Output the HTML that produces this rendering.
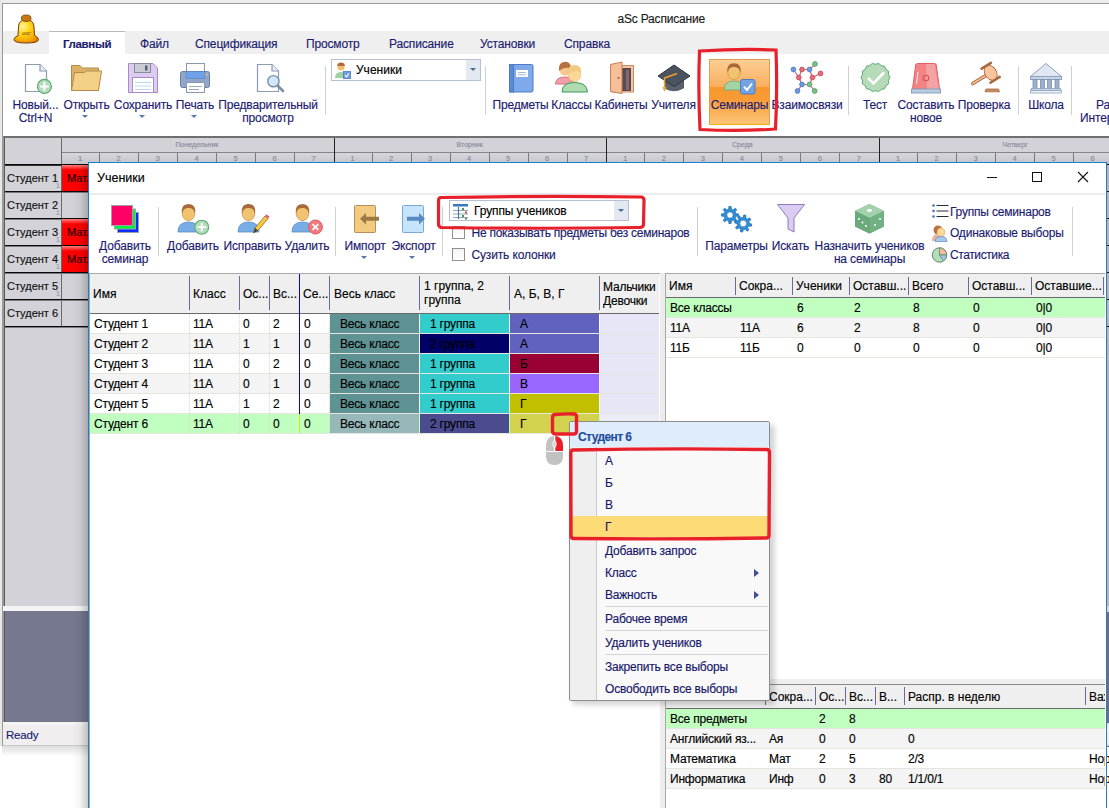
<!DOCTYPE html>
<html><head><meta charset="utf-8">
<style>
*{box-sizing:border-box;margin:0;padding:0}
html,body{width:1109px;height:808px;overflow:hidden;background:#fff}
body{position:relative;font-family:"Liberation Sans",sans-serif;font-size:12px;color:#000;-webkit-text-stroke:0.15px currentColor}
.a{position:absolute}
.t{position:absolute;white-space:nowrap;line-height:14px}
.nv{color:#1c1c70}
.lbl{position:absolute;white-space:nowrap;line-height:13px;color:#1c1c70;text-align:center;letter-spacing:-0.15px}
.sep{position:absolute;width:1px;background:#c8c8c8}
.arr{position:absolute;width:0;height:0;border-left:3px solid transparent;border-right:3px solid transparent;border-top:3px solid #5577aa}
.tiny{position:absolute;white-space:nowrap;font-size:7px;line-height:8px;color:#8a8a9a;text-align:center}
</style></head><body>
<div class="a" style="left:0px;top:0px;width:1109px;height:3px;background:#ececec"></div>
<div class="a" style="left:0px;top:0px;width:2px;height:746px;background:#e8e8e8"></div>
<div class="a" style="left:2px;top:3px;width:1107px;height:743px;background:#fff;border-left:1px solid #9a9a9a;border-top:1px solid #9a9a9a"></div>
<div class="t" style="left:617.5px;top:11.5px;color:#1a1a1a;letter-spacing:-0.2px">aSc Расписание</div>
<div class="a" style="left:3px;top:31px;width:1106px;height:23px;background:#efefef"></div>
<div class="a" style="left:49px;top:31px;width:76px;height:23px;background:#fff;border-top:1px solid #b9b9b9"></div>
<div class="t nv" style="left:63px;top:36px;font-weight:bold;font-size:11.5px;letter-spacing:-0.35px;top:37px">Главный</div>
<div class="t nv" style="left:140px;top:36px;letter-spacing:-0.15px;top:36.5px">Файл</div>
<div class="t nv" style="left:195px;top:36px;letter-spacing:-0.15px;top:36.5px">Спецификация</div>
<div class="t nv" style="left:306px;top:36px;letter-spacing:-0.15px;top:36.5px">Просмотр</div>
<div class="t nv" style="left:389px;top:36px;letter-spacing:-0.15px;top:36.5px">Расписание</div>
<div class="t nv" style="left:480px;top:36px;letter-spacing:-0.15px;top:36.5px">Установки</div>
<div class="t nv" style="left:564px;top:36px;letter-spacing:-0.15px;top:36.5px">Справка</div>
<div class="lbl" style="left:-34.5px;top:99px;width:140px;">Новый...</div>
<div class="lbl" style="left:-34.5px;top:112px;width:140px;">Ctrl+N</div>
<div class="lbl" style="left:16.5px;top:99px;width:140px;">Открыть</div>
<div class="lbl" style="left:73.0px;top:99px;width:140px;">Сохранить</div>
<div class="lbl" style="left:125.0px;top:99px;width:140px;">Печать</div>
<div class="lbl" style="left:198.0px;top:99px;width:140px;">Предварительный</div>
<div class="lbl" style="left:198.0px;top:112px;width:140px;">просмотр</div>
<div class="lbl" style="left:450.5px;top:99px;width:140px;">Предметы</div>
<div class="lbl" style="left:501.5px;top:99px;width:140px;">Классы</div>
<div class="lbl" style="left:551.0px;top:99px;width:140px;">Кабинеты</div>
<div class="lbl" style="left:603.5px;top:99px;width:140px;">Учителя</div>
<div class="lbl" style="left:737.0px;top:99px;width:140px;">Взаимосвязи</div>
<div class="lbl" style="left:805.0px;top:99px;width:140px;">Тест</div>
<div class="lbl" style="left:856.0px;top:99px;width:140px;">Составить</div>
<div class="lbl" style="left:856.0px;top:112px;width:140px;">новое</div>
<div class="lbl" style="left:914.0px;top:99px;width:140px;">Проверка</div>
<div class="lbl" style="left:976.0px;top:99px;width:140px;">Школа</div>
<div class="lbl" style="left:1096px;top:99px;text-align:left">Расписание</div>
<div class="lbl" style="left:1080px;top:112px;text-align:left">Интерактивное</div>
<div class="arr" style="left:82px;top:115px"></div>
<div class="arr" style="left:139px;top:115px"></div>
<div class="arr" style="left:191px;top:115px"></div>
<div class="a" style="left:325px;top:66px;width:1px;height:49px;background:#cfcfcf"></div>
<div class="a" style="left:485px;top:66px;width:1px;height:49px;background:#cfcfcf"></div>
<div class="a" style="left:848px;top:66px;width:1px;height:49px;background:#cfcfcf"></div>
<div class="a" style="left:1018px;top:66px;width:1px;height:49px;background:#cfcfcf"></div>
<div class="a" style="left:1071px;top:66px;width:1px;height:49px;background:#cfcfcf"></div>
<div class="a" style="left:331px;top:59px;width:150px;height:22px;background:#fff;border:1px solid #b7c0d0"></div>
<div class="a" style="left:466px;top:60px;width:14px;height:20px;background:#e4e8f0"></div>
<div class="arr" style="left:470px;top:68px;border-top-color:#4a6a9a"></div>
<div class="t" style="left:356px;top:63px;color:#000">Ученики</div>
<div class="a" style="left:709px;top:59px;width:61px;height:66px;background:linear-gradient(#fccf93,#f9ad5e 27px,#f8982f 27px,#f99a35 60%,#fcc57a);border:1px solid #d9a055;border-bottom-color:#f0b000;border-radius:1px"></div>
<div class="lbl" style="left:669.5px;top:99px;width:140px;">Семинары</div>
<svg class="a" style="left:0;top:0" width="1109" height="140" viewBox="0 0 1109 140">
<!-- bell logo -->
<defs><radialGradient id="bg1" cx="0.35" cy="0.3" r="0.8"><stop offset="0" stop-color="#fff6a0"/><stop offset="0.35" stop-color="#ffd820"/><stop offset="0.8" stop-color="#f5a800"/><stop offset="1" stop-color="#e08000"/></radialGradient></defs>
<path d="M18.5 27 Q18.5 20 26.2 19.5 Q34 20 34 27 L34.5 35.5 Q38.5 37.5 38.5 39.5 Q38.5 43 26.2 43 Q14 43 14 39.5 Q14 37.5 18 35.5 Z" fill="url(#bg1)" stroke="#7a3a08" stroke-width="1"/>
<path d="M16 39 Q26 44 37 39 Q36 41.5 26.2 42 Q16.5 41.5 16 39Z" fill="#ff8a00" opacity="0.8"/>
<ellipse cx="26.2" cy="18.2" rx="4.8" ry="3.2" fill="#c87a10" stroke="#6a3a08" stroke-width="0.8"/>
<text x="26.5" y="35" font-size="6.5" text-anchor="middle" fill="#7a3a08" font-family="Liberation Serif" font-style="italic">asc</text>
<!-- new -->
<path d="M25.5 64.5 H40 L46.5 71 V91.5 H25.5 Z" fill="#fff" stroke="#8a9bb2" stroke-width="1.2"/>
<path d="M40 64.5 V71 H46.5" fill="#e8eef4" stroke="#8a9bb2" stroke-width="1.2"/>
<circle cx="44.4" cy="86.4" r="7" fill="#b3dcbc" stroke="#5ea874" stroke-width="1.2"/>
<path d="M44.4 82 V90.8 M40 86.4 H48.8" stroke="#fff" stroke-width="2"/>
<!-- folder -->
<path d="M71.5 65.5 H80 L82.5 68 H98.5 V90.5 H71.5 Z" fill="#dcb066" stroke="#b48a48"/>
<path d="M74.5 72.5 H84.5 L86.5 71 H101.5 L98.5 90.5 H71.5 Z" fill="#f4d087" stroke="#b48a48"/>
<!-- floppy -->
<path d="M128.5 63.5 H153 L157.5 68 V92.5 H128.5 Z" fill="#dccdf0" stroke="#a78bc6"/>
<rect x="134.5" y="63.5" width="16" height="9" fill="#c9ccd4" stroke="#858c9c"/>
<rect x="145" y="65.5" width="2.5" height="5" fill="#5a6272"/>
<rect x="132.5" y="77.5" width="21" height="15" fill="#fff" stroke="#a78bc6"/>
<path d="M135 82.5 H151 M135 86 H151 M135 89.5 H151" stroke="#b8d8f0" stroke-width="1"/>
<!-- printer -->
<rect x="186.5" y="63.5" width="18" height="9" fill="#fff" stroke="#8797b0"/>
<rect x="180.5" y="71.5" width="29" height="16" rx="2" fill="#8fa6c8" stroke="#6a80a0"/>
<rect x="186" y="71.5" width="19" height="7" fill="#6fa0e8" stroke="#5a80c0" stroke-width="0.6"/>
<circle cx="206.5" cy="74.5" r="1" fill="#f0d040"/>
<rect x="186.5" y="82.5" width="18" height="10" fill="#fff" stroke="#8797b0"/>
<path d="M189 86.5 H202 M189 89.5 H199" stroke="#9aa8bc"/>
<!-- preview -->
<path d="M257.5 64.5 H272 L278.5 71 V91.5 H257.5 Z" fill="#fff" stroke="#8a9bb2" stroke-width="1.2"/>
<path d="M272 64.5 V71 H278.5" fill="#e8eef4" stroke="#8a9bb2" stroke-width="1.2"/>
<line x1="277" y1="85" x2="283" y2="91" stroke="#7b90a8" stroke-width="2.6" stroke-linecap="round"/>
<circle cx="273.4" cy="81.2" r="5.6" fill="#d0e8fa" stroke="#7b90a8" stroke-width="1.4"/>
<!-- combo icon -->
<circle cx="341" cy="67" r="3.6" fill="#f0c070"/>
<path d="M337.3 66 Q337 62.5 341 62.5 Q345 62.5 344.8 66 Z" fill="#b06a3a"/>
<path d="M335 78 Q335 72 341 72 Q347 72 347 78 Z" fill="#9ed0a0"/>
<rect x="343.5" y="71.5" width="7" height="7" fill="#6f9fe0" stroke="#4a7ac0" stroke-width="0.8"/>
<path d="M345 75 L346.5 76.8 L349 73.5" stroke="#fff" fill="none" stroke-width="1.1"/>
<!-- book -->
<rect x="509.5" y="64.5" width="23.5" height="27.5" rx="1.5" fill="#7eaaeb" stroke="#4d7cc4"/>
<rect x="509.5" y="64.5" width="4" height="27.5" fill="#5b8bd2" stroke="#4d7cc4"/>
<rect x="516" y="70" width="12" height="7" fill="#fff"/>
<path d="M518 72.5 H526 M518 74.8 H526" stroke="#9ab4d8" stroke-width="0.9"/>
<!-- classes -->
<path d="M555.5 84 Q556 77 565 77 Q574 77 574 84 Z" fill="#f2a0a8" stroke="#d87080"/>
<circle cx="565" cy="70" r="5.5" fill="#f8c890"/>
<path d="M559 71 Q558 62 565 61.8 Q572 62 571 70 Q567 65 559 71Z" fill="#b8703e"/>
<path d="M562 92 Q562 82.5 574.5 82.5 Q587 82.5 587.5 92 Z" fill="#aedcb0" stroke="#3f9a5e"/>
<ellipse cx="574.5" cy="74.5" rx="6.3" ry="7.2" fill="#fcd898" stroke="#e8b870" stroke-width="0.6"/>
<path d="M567.8 74 Q567 65 574.5 65 Q582 65 581.3 74 Q579 68.5 567.8 74Z" fill="#f2cc7e"/>
<!-- door -->
<rect x="612.5" y="65.5" width="21" height="26.5" fill="#f4c4a0" stroke="#c58a64"/>
<rect x="619" y="68" width="12" height="23" fill="#5c4a52"/>
<rect x="626" y="70" width="3" height="20" fill="#806a72"/>
<path d="M610.5 64.5 L622 62 V93.5 L610.5 91.5 Z" fill="#f6bf98" stroke="#c27e58"/>
<circle cx="618.5" cy="78" r="0.9" fill="#8a5030"/>
<!-- cap -->
<path d="M664.5 79 V88 Q674 93.5 683.5 88 V79 Z" fill="#59626c" stroke="#3c444c" stroke-width="0.8"/>
<path d="M658 76 L674 65 L690 76 L674 86.5 Z" fill="#4b545e" stroke="#2e353c" stroke-width="1"/>
<path d="M677 73.5 L664.5 78 V88" stroke="#f2a52a" stroke-width="1.4" fill="none"/>
<path d="M662.5 87 L664.5 92 L666.5 87 Z" fill="#f2a52a"/>
<!-- seminars icon -->
<path d="M724 90 Q724 81 734 81 Q744 81 744 90 Z" fill="#a4d4a4" stroke="#70a878" stroke-width="0.8"/>
<ellipse cx="734" cy="72.5" rx="6.2" ry="7" fill="#f1c36f" stroke="#c89050" stroke-width="0.7"/>
<path d="M727.5 73 Q726 63.2 734 63.2 Q742 63.2 740.5 73 Q739.5 66.5 734 67 Q728.5 66.5 727.5 73Z" fill="#a8683a"/>
<rect x="740.5" y="79.5" width="14.5" height="14.5" rx="2" fill="#72a2e2" stroke="#4d7dc4"/>
<path d="M744 86.8 L747 90 L752 83.5" stroke="#fff" stroke-width="2" fill="none"/>
<!-- molecule -->
<g stroke-width="1.2">
<path d="M793.4 69.5 L798.8 77.5 M802 69.5 L798.8 77.5 M802 69.5 L809.5 69.5 M809.5 69.5 L815 64 M809.5 69.5 L812.5 77.5 M812.5 77.5 L820.5 73.5 M798.8 77.5 L802 84.5 M812.5 77.5 L809.5 84.5 M802 84.5 L809.5 84.5 M802 84.5 L797.5 91 M809.5 84.5 L814.7 91" stroke="#c86a7a"/>
</g>
<g stroke-width="0.8">
<circle cx="793.4" cy="69.5" r="2.4" fill="#6b9ae0" stroke="#4a78c0"/>
<circle cx="802" cy="69.5" r="2.4" fill="#e86a78" stroke="#c04a58"/>
<circle cx="809.5" cy="69.5" r="2.4" fill="#6b9ae0" stroke="#4a78c0"/>
<circle cx="815" cy="64" r="2.4" fill="#7cc08a" stroke="#4a9a5a"/>
<circle cx="820.5" cy="73.5" r="2.4" fill="#e86a78" stroke="#c04a58"/>
<circle cx="798.8" cy="77.5" r="2.4" fill="#e86a78" stroke="#c04a58"/>
<circle cx="812.5" cy="77.5" r="2.4" fill="#e86a78" stroke="#c04a58"/>
<circle cx="802" cy="84.5" r="2.4" fill="#6b9ae0" stroke="#4a78c0"/>
<circle cx="809.5" cy="84.5" r="2.4" fill="#7cc08a" stroke="#4a9a5a"/>
<circle cx="797.5" cy="91" r="2.4" fill="#6b9ae0" stroke="#4a78c0"/>
<circle cx="814.7" cy="91" r="2.4" fill="#7cc08a" stroke="#4a9a5a"/>
</g>
<!-- test badge -->
<polygon id="badge" fill="#b6dbb8" stroke="#5ea874" stroke-width="1" points="890.0,77.5 888.4,80.4 888.6,83.8 885.8,85.7 884.5,88.8 881.2,89.4 878.7,91.6 875.5,90.7 872.3,91.6 869.8,89.4 866.5,88.8 865.2,85.7 862.4,83.8 862.6,80.4 861.0,77.5 862.6,74.6 862.4,71.2 865.2,69.3 866.5,66.2 869.8,65.6 872.3,63.4 875.5,64.3 878.7,63.4 881.2,65.6 884.5,66.2 885.8,69.3 888.6,71.2 888.4,74.6"/>
<path d="M868 78 L873.5 83.5 L884 72.5" stroke="#fff" stroke-width="2.6" fill="none"/>
<!-- siren -->
<path d="M917.5 63.5 H934.5 Q936 63.5 936.3 65 L939.5 89 H912.5 L915.7 65 Q916 63.5 917.5 63.5Z" fill="#f28486" stroke="#e06064"/>
<path d="M926 64 H934.5 L938.8 89 H927 Z" fill="#f5a2a4"/>
<path d="M918 72 L916.5 84" stroke="#fff" stroke-width="1" opacity="0.8"/>
<circle cx="926" cy="78" r="2.8" fill="none" stroke="#d45458" stroke-width="1.1"/>
<rect x="911.5" y="89" width="29" height="4" fill="#b7cce0" stroke="#8aa2ba"/>
<!-- gavel -->
<path d="M972.8 83.5 L986 75.5" stroke="#a86a44" stroke-width="3.6" stroke-linecap="round"/>
<path d="M972.8 83.5 L986 75.5" stroke="#f2b890" stroke-width="1.8" stroke-linecap="round"/>
<g transform="rotate(-32 990.7 72.8)">
<ellipse cx="990.7" cy="72.8" rx="5.8" ry="8" fill="#fcc49a" stroke="#a86a44" stroke-width="0.9"/>
<rect x="984" y="63.2" width="13.4" height="2.6" rx="1.2" fill="#a86a44"/>
<rect x="984" y="79.8" width="13.4" height="2.6" rx="1.2" fill="#a86a44"/>
</g>
<path d="M986 89 H998.5 L999.5 91.8 H985 Z" fill="#c98a62" stroke="#a86a44" stroke-width="0.8"/>
<!-- school -->
<path d="M1030.5 76.5 L1046 63.5 L1061.5 76.5 Z" fill="#dfe8f2" stroke="#8ca2c0"/>
<rect x="1030.5" y="76.5" width="31" height="3" fill="#c8d4e2" stroke="#8ca2c0"/>
<rect x="1033" y="79.5" width="4" height="9" fill="#9bb0cc" stroke="#7a90b0" stroke-width="0.8"/>
<rect x="1040.5" y="79.5" width="4" height="9" fill="#9bb0cc" stroke="#7a90b0" stroke-width="0.8"/>
<rect x="1047.5" y="79.5" width="4" height="9" fill="#9bb0cc" stroke="#7a90b0" stroke-width="0.8"/>
<rect x="1055" y="79.5" width="4" height="9" fill="#9bb0cc" stroke="#7a90b0" stroke-width="0.8"/>
<rect x="1031.5" y="88.5" width="29" height="2" fill="#c8d4e2" stroke="#8ca2c0" stroke-width="0.8"/>
<rect x="1030.5" y="90.5" width="31" height="2.5" fill="#eef2f7" stroke="#8ca2c0" stroke-width="0.8"/>
<!-- red highlight ribbon -->
<path d="M699.5 51 Q740 48.5 776 50 Q777.5 90 775.5 129 Q738 131.5 700 129.5 Q698 90 699.5 51Z" fill="none" stroke="#e8202c" stroke-width="3.2"/>
</svg>

<div class="a" style="left:3px;top:136px;width:1106px;height:470px;background:#d2d2d8;border-top:2px solid #6f6f6f;border-left:1px solid #9a9a9a"></div>
<div class="a" style="left:4px;top:138px;width:1px;height:468px;background:#5a5a5a"></div>
<div class="a" style="left:62px;top:152px;width:1047px;height:1px;background:#858585"></div>
<div class="a" style="left:61px;top:138px;width:1px;height:189px;background:#6a6a6a"></div>
<div class="a" style="left:62px;top:153px;width:1047px;height:11px;background:linear-gradient(#d6d6dc,#c4c4cb)"></div>
<div class="tiny" style="left:61.0px;top:141px;width:272px">Понедельник</div>
<div class="tiny" style="left:61.0px;top:155px;width:38.0px;font-size:7.5px">1</div>
<div class="a" style="left:99px;top:153px;width:1px;height:11px;background:#7a7a7a"></div>
<div class="tiny" style="left:99.0px;top:155px;width:39.0px;font-size:7.5px">2</div>
<div class="a" style="left:138px;top:153px;width:1px;height:11px;background:#7a7a7a"></div>
<div class="tiny" style="left:138.0px;top:155px;width:39.0px;font-size:7.5px">3</div>
<div class="a" style="left:177px;top:153px;width:1px;height:11px;background:#7a7a7a"></div>
<div class="tiny" style="left:177.0px;top:155px;width:39.0px;font-size:7.5px">4</div>
<div class="a" style="left:216px;top:153px;width:1px;height:11px;background:#7a7a7a"></div>
<div class="tiny" style="left:216.0px;top:155px;width:39.0px;font-size:7.5px">5</div>
<div class="a" style="left:255px;top:153px;width:1px;height:11px;background:#7a7a7a"></div>
<div class="tiny" style="left:255.0px;top:155px;width:39.0px;font-size:7.5px">6</div>
<div class="a" style="left:294px;top:153px;width:1px;height:11px;background:#7a7a7a"></div>
<div class="tiny" style="left:294.0px;top:155px;width:39.0px;font-size:7.5px">7</div>
<div class="tiny" style="left:333.7px;top:141px;width:272px">Вторник</div>
<div class="tiny" style="left:333.7px;top:155px;width:38.0px;font-size:7.5px">1</div>
<div class="a" style="left:372px;top:153px;width:1px;height:11px;background:#7a7a7a"></div>
<div class="tiny" style="left:371.7px;top:155px;width:39.0px;font-size:7.5px">2</div>
<div class="a" style="left:411px;top:153px;width:1px;height:11px;background:#7a7a7a"></div>
<div class="tiny" style="left:410.7px;top:155px;width:39.0px;font-size:7.5px">3</div>
<div class="a" style="left:450px;top:153px;width:1px;height:11px;background:#7a7a7a"></div>
<div class="tiny" style="left:449.7px;top:155px;width:39.0px;font-size:7.5px">4</div>
<div class="a" style="left:489px;top:153px;width:1px;height:11px;background:#7a7a7a"></div>
<div class="tiny" style="left:488.7px;top:155px;width:39.0px;font-size:7.5px">5</div>
<div class="a" style="left:528px;top:153px;width:1px;height:11px;background:#7a7a7a"></div>
<div class="tiny" style="left:527.7px;top:155px;width:39.0px;font-size:7.5px">6</div>
<div class="a" style="left:567px;top:153px;width:1px;height:11px;background:#7a7a7a"></div>
<div class="tiny" style="left:566.7px;top:155px;width:39.0px;font-size:7.5px">7</div>
<div class="a" style="left:334px;top:138px;width:1px;height:26px;background:#222"></div>
<div class="tiny" style="left:606.4px;top:141px;width:272px">Среда</div>
<div class="tiny" style="left:606.4px;top:155px;width:38.0px;font-size:7.5px">1</div>
<div class="a" style="left:644px;top:153px;width:1px;height:11px;background:#7a7a7a"></div>
<div class="tiny" style="left:644.4px;top:155px;width:39.0px;font-size:7.5px">2</div>
<div class="a" style="left:683px;top:153px;width:1px;height:11px;background:#7a7a7a"></div>
<div class="tiny" style="left:683.4px;top:155px;width:39.0px;font-size:7.5px">3</div>
<div class="a" style="left:722px;top:153px;width:1px;height:11px;background:#7a7a7a"></div>
<div class="tiny" style="left:722.4px;top:155px;width:39.0px;font-size:7.5px">4</div>
<div class="a" style="left:761px;top:153px;width:1px;height:11px;background:#7a7a7a"></div>
<div class="tiny" style="left:761.4px;top:155px;width:39.0px;font-size:7.5px">5</div>
<div class="a" style="left:800px;top:153px;width:1px;height:11px;background:#7a7a7a"></div>
<div class="tiny" style="left:800.4px;top:155px;width:39.0px;font-size:7.5px">6</div>
<div class="a" style="left:839px;top:153px;width:1px;height:11px;background:#7a7a7a"></div>
<div class="tiny" style="left:839.4px;top:155px;width:39.0px;font-size:7.5px">7</div>
<div class="a" style="left:606px;top:138px;width:1px;height:26px;background:#222"></div>
<div class="tiny" style="left:879.1px;top:141px;width:272px">Четверг</div>
<div class="tiny" style="left:879.1px;top:155px;width:38.0px;font-size:7.5px">1</div>
<div class="a" style="left:917px;top:153px;width:1px;height:11px;background:#7a7a7a"></div>
<div class="tiny" style="left:917.1px;top:155px;width:39.0px;font-size:7.5px">2</div>
<div class="a" style="left:956px;top:153px;width:1px;height:11px;background:#7a7a7a"></div>
<div class="tiny" style="left:956.1px;top:155px;width:39.0px;font-size:7.5px">3</div>
<div class="a" style="left:995px;top:153px;width:1px;height:11px;background:#7a7a7a"></div>
<div class="tiny" style="left:995.1px;top:155px;width:39.0px;font-size:7.5px">4</div>
<div class="a" style="left:1034px;top:153px;width:1px;height:11px;background:#7a7a7a"></div>
<div class="tiny" style="left:1034.1px;top:155px;width:39.0px;font-size:7.5px">5</div>
<div class="a" style="left:1073px;top:153px;width:1px;height:11px;background:#7a7a7a"></div>
<div class="tiny" style="left:1073.1px;top:155px;width:39.0px;font-size:7.5px">6</div>
<div class="a" style="left:1112px;top:153px;width:1px;height:11px;background:#7a7a7a"></div>
<div class="tiny" style="left:1112.1px;top:155px;width:39.0px;font-size:7.5px">7</div>
<div class="a" style="left:879px;top:138px;width:1px;height:26px;background:#222"></div>
<div class="a" style="left:5px;top:164px;width:1104px;height:1px;background:#0a0a0a"></div>
<div class="a" style="left:5px;top:165px;width:1104px;height:1px;background:#333"></div>
<div class="a" style="left:5px;top:191px;width:1104px;height:1px;background:#0a0a0a"></div>
<div class="a" style="left:5px;top:192px;width:1104px;height:1px;background:#7a7a80"></div>
<div class="a" style="left:5px;top:218px;width:1104px;height:1px;background:#0a0a0a"></div>
<div class="a" style="left:5px;top:219px;width:1104px;height:1px;background:#7a7a80"></div>
<div class="a" style="left:5px;top:245px;width:1104px;height:1px;background:#0a0a0a"></div>
<div class="a" style="left:5px;top:246px;width:1104px;height:1px;background:#7a7a80"></div>
<div class="a" style="left:5px;top:272px;width:1104px;height:1px;background:#0a0a0a"></div>
<div class="a" style="left:5px;top:273px;width:1104px;height:1px;background:#7a7a80"></div>
<div class="a" style="left:5px;top:299px;width:1104px;height:1px;background:#0a0a0a"></div>
<div class="a" style="left:5px;top:300px;width:1104px;height:1px;background:#7a7a80"></div>
<div class="a" style="left:5px;top:326px;width:1104px;height:1px;background:#0a0a0a"></div>
<div class="a" style="left:5px;top:327px;width:1104px;height:1px;background:#7a7a80"></div>
<div class="t" style="left:7px;top:171px;font-size:11px;color:#111">Студент 1</div>
<div class="tiny" style="left:55px;top:182px;width:6px;color:#9a9aaa">1</div>
<div class="a" style="left:62px;top:165px;width:27px;height:26px;background:linear-gradient(#ff8080,#ff0000 5px,#ff0000)"></div>
<div class="t" style="left:67px;top:171px;font-size:11px;color:#200">Мат.</div>
<div class="t" style="left:7px;top:198px;font-size:11px;color:#111">Студент 2</div>
<div class="tiny" style="left:55px;top:209px;width:6px;color:#9a9aaa">1</div>
<div class="t" style="left:7px;top:225px;font-size:11px;color:#111">Студент 3</div>
<div class="tiny" style="left:55px;top:236px;width:6px;color:#9a9aaa">1</div>
<div class="a" style="left:62px;top:219px;width:27px;height:26px;background:linear-gradient(#ff8080,#ff0000 5px,#ff0000)"></div>
<div class="t" style="left:67px;top:225px;font-size:11px;color:#200">Мат.</div>
<div class="t" style="left:7px;top:252px;font-size:11px;color:#111">Студент 4</div>
<div class="tiny" style="left:55px;top:263px;width:6px;color:#9a9aaa">1</div>
<div class="a" style="left:62px;top:246px;width:27px;height:26px;background:linear-gradient(#ff8080,#ff0000 5px,#ff0000)"></div>
<div class="t" style="left:67px;top:252px;font-size:11px;color:#200">Мат.</div>
<div class="t" style="left:7px;top:279px;font-size:11px;color:#111">Студент 5</div>
<div class="tiny" style="left:55px;top:290px;width:6px;color:#9a9aaa">1</div>
<div class="t" style="left:7px;top:306px;font-size:11px;color:#111">Студент 6</div>
<div class="a" style="left:3px;top:606px;width:1106px;height:5px;background:#f4f4f4"></div>
<div class="a" style="left:3px;top:611px;width:1106px;height:111px;background:#767890;border-left:1px solid #9a9a9a"></div>
<div class="a" style="left:4px;top:611px;width:1px;height:111px;background:#5a5a5a"></div>
<div class="a" style="left:3px;top:722px;width:1106px;height:3px;background:#f4f4f4"></div>
<div class="a" style="left:3px;top:725px;width:1106px;height:21px;background:#f0eeee;border-bottom:1px solid #c8c8c8"></div>
<div class="t nv" style="left:6px;top:729px;letter-spacing:-0.2px;font-size:11.5px;top:728px">Ready</div>
<div class="a" style="left:2px;top:746px;width:86px;height:10px;background:linear-gradient(rgba(0,0,0,0.13),rgba(0,0,0,0))"></div>
<div class="a" style="left:72px;top:164px;width:16px;height:644px;background:linear-gradient(90deg,rgba(0,0,0,0),rgba(0,0,0,0.04) 50%,rgba(0,0,0,0.2))"></div>
<div class="a" style="left:88px;top:162px;width:1019px;height:660px;background:#fff;border:1px solid #1b7fd0"></div>
<div class="t" style="left:97px;top:171px;font-size:12.5px">Ученики</div>
<div class="a" style="left:89px;top:193px;width:1017px;height:2px;background:#ececec"></div>
<div class="lbl" style="left:55.0px;top:240px;width:140px;">Добавить</div>
<div class="lbl" style="left:55.0px;top:253px;width:140px;">семинар</div>
<div class="lbl" style="left:123.0px;top:240px;width:140px;">Добавить</div>
<div class="lbl" style="left:182.5px;top:240px;width:140px;">Исправить</div>
<div class="lbl" style="left:237.0px;top:240px;width:140px;">Удалить</div>
<div class="lbl" style="left:295.0px;top:240px;width:140px;">Импорт</div>
<div class="lbl" style="left:343.5px;top:240px;width:140px;">Экспорт</div>
<div class="lbl" style="left:666.5px;top:240px;width:140px;">Параметры</div>
<div class="lbl" style="left:720.5px;top:240px;width:140px;">Искать</div>
<div class="lbl" style="left:799.5px;top:240px;width:140px;">Назначить учеников</div>
<div class="lbl" style="left:799.5px;top:253px;width:140px;">на семинары</div>
<div class="arr" style="left:361px;top:256px"></div>
<div class="arr" style="left:409px;top:256px"></div>
<div class="a" style="left:158px;top:207px;width:1px;height:49px;background:#cfcfcf"></div>
<div class="a" style="left:335px;top:207px;width:1px;height:49px;background:#cfcfcf"></div>
<div class="a" style="left:442px;top:207px;width:1px;height:49px;background:#cfcfcf"></div>
<div class="a" style="left:697px;top:207px;width:1px;height:49px;background:#cfcfcf"></div>
<div class="a" style="left:1072px;top:207px;width:1px;height:49px;background:#cfcfcf"></div>
<div class="a" style="left:449px;top:200px;width:180px;height:21px;background:#fff;border:1px solid #b7c0d0"></div>
<div class="a" style="left:614px;top:201px;width:14px;height:19px;background:#e4e8f0"></div>
<div class="arr" style="left:618px;top:209px;border-top-color:#4a6a9a"></div>
<div class="t" style="left:474px;top:204px;color:#000;letter-spacing:-0.1px">Группы учеников</div>
<div class="a" style="left:452px;top:226px;width:13px;height:13px;background:linear-gradient(#f4f4f4,#fff);border:1px solid #8f8f8f"></div>
<div class="a" style="left:452px;top:248px;width:13px;height:13px;background:linear-gradient(#f4f4f4,#fff);border:1px solid #8f8f8f"></div>
<div class="t nv" style="left:471.5px;top:226px;letter-spacing:-0.25px">Не показывать предметы без семинаров</div>
<div class="t nv" style="left:471.5px;top:248px;letter-spacing:-0.15px">Сузить колонки</div>
<div class="t nv" style="left:950px;top:204.5px;letter-spacing:-0.2px">Группы семинаров</div>
<div class="t nv" style="left:950px;top:226px;letter-spacing:-0.2px">Одинаковые выборы</div>
<div class="t nv" style="left:950px;top:248px;letter-spacing:-0.4px">Статистика</div>
<svg class="a" style="left:0;top:160px" width="1109" height="120" viewBox="0 160 1109 120">
<!-- add seminar squares -->
<rect x="117.5" y="212.5" width="21" height="20" fill="#0a2cff" stroke="#9aa0b0"/>
<rect x="114.5" y="209" width="21" height="20" fill="#00f040" stroke="#a0a8a0"/>
<rect x="111.5" y="205.5" width="21" height="20" fill="#ff0066" stroke="#a0a0a8"/>
<!-- person generic -->
<g>
<path d="M178 232 Q178 222 188.5 222 Q199 222 199 232 Z" fill="#78aee6" stroke="#5a8cc8" stroke-width="0.8"/>
<ellipse cx="188.5" cy="213.5" rx="6.3" ry="7.2" fill="#f1c36f" stroke="#c89050" stroke-width="0.7"/>
<path d="M182 214 Q180.5 204 188.5 204 Q196.5 204 195 214 Q194 207.5 188.5 208 Q183 207.5 182 214Z" fill="#a8683a"/>
</g>
<circle cx="201.7" cy="227.2" r="7" fill="#b3dcbc" stroke="#5ea874" stroke-width="1.1"/>
<path d="M201.7 223 V231.4 M197.5 227.2 H205.9" stroke="#fff" stroke-width="1.8"/>
<g transform="translate(60 0)">
<path d="M178 232 Q178 222 188.5 222 Q199 222 199 232 Z" fill="#78aee6" stroke="#5a8cc8" stroke-width="0.8"/>
<ellipse cx="188.5" cy="213.5" rx="6.3" ry="7.2" fill="#f1c36f" stroke="#c89050" stroke-width="0.7"/>
<path d="M182 214 Q180.5 204 188.5 204 Q196.5 204 195 214 Q194 207.5 188.5 208 Q183 207.5 182 214Z" fill="#a8683a"/>
</g>
<path d="M253.5 233 L255 228 L265 216 L268 218.5 L258 230.5 Z" fill="#f5c842" stroke="#8a6a30" stroke-width="0.8"/>
<path d="M265 216 L266.5 214.2 L269.5 216.7 L268 218.5 Z" fill="#e86070"/>
<path d="M253.5 233 L255 228 L258 230.5 Z" fill="#404040"/>
<g transform="translate(114 0)">
<path d="M178 232 Q178 222 188.5 222 Q199 222 199 232 Z" fill="#78aee6" stroke="#5a8cc8" stroke-width="0.8"/>
<ellipse cx="188.5" cy="213.5" rx="6.3" ry="7.2" fill="#f1c36f" stroke="#c89050" stroke-width="0.7"/>
<path d="M182 214 Q180.5 204 188.5 204 Q196.5 204 195 214 Q194 207.5 188.5 208 Q183 207.5 182 214Z" fill="#a8683a"/>
</g>
<circle cx="315.4" cy="227" r="7" fill="#f07a80" stroke="#e05a62" stroke-width="1"/>
<path d="M312.5 224.1 L318.3 229.9 M318.3 224.1 L312.5 229.9" stroke="#fff" stroke-width="1.8"/>
<!-- import -->
<rect x="354.5" y="205.5" width="21" height="27" rx="1" fill="#f2ca80" stroke="#b8905a"/>
<path d="M360 218.8 L366 213 V216.8 H379 V220.8 H366 V224.6 Z" fill="#9a7a42"/>
<!-- export -->
<rect x="402.5" y="205.5" width="21" height="27" rx="1" fill="#c6e5fb" stroke="#7ea8d8"/>
<path d="M425 218.8 L419 213 V216.8 H407 V220.8 H419 V224.6 Z" fill="#5a88c2"/>
<!-- combo groups icon -->
<rect x="453" y="204" width="15" height="2.5" fill="#3a78c0"/>
<path d="M453 210.5 H468 M453 214 H468 M453 217.5 H468" stroke="#9aa4b0" stroke-width="1"/>
<path d="M458.5 207 V219" stroke="#3a78c0" stroke-width="1.2"/>
<rect x="462" y="208" width="2" height="2" fill="#40a040"/><rect x="465" y="211.5" width="2" height="2" fill="#e04040"/><rect x="462" y="215" width="2" height="2" fill="#40a040"/><rect x="465" y="218" width="2" height="1.5" fill="#40a040"/>
<!-- gears -->
<polygon points="735.85,213.65 738.53,213.92 738.53,216.08 735.85,216.35 735.09,218.18 736.80,220.27 735.27,221.80 733.18,220.09 731.35,220.85 731.08,223.53 728.92,223.53 728.65,220.85 726.82,220.09 724.73,221.80 723.20,220.27 724.91,218.18 724.15,216.35 721.47,216.08 721.47,213.92 724.15,213.65 724.91,211.82 723.20,209.73 724.73,208.20 726.82,209.91 728.65,209.15 728.92,206.47 731.08,206.47 731.35,209.15 733.18,209.91 735.27,208.20 736.80,209.73 735.09,211.82" fill="#2f8fd6" stroke="#1f70b4" stroke-width="0.8" stroke-linejoin="round"/>
<circle cx="730" cy="215" r="3.1" fill="#fff" stroke="#1f70b4" stroke-width="0.5"/>
<polygon points="749.20,223.34 751.78,224.14 751.35,226.25 748.66,225.98 747.55,227.63 748.81,230.02 747.02,231.21 745.31,229.12 743.36,229.50 742.56,232.08 740.45,231.65 740.72,228.96 739.07,227.85 736.68,229.11 735.49,227.32 737.58,225.61 737.20,223.66 734.62,222.86 735.05,220.75 737.74,221.02 738.85,219.37 737.59,216.98 739.38,215.79 741.09,217.88 743.04,217.50 743.84,214.92 745.95,215.35 745.68,218.04 747.33,219.15 749.72,217.89 750.91,219.68 748.82,221.39" fill="#2f8fd6" stroke="#1f70b4" stroke-width="0.8" stroke-linejoin="round"/>
<circle cx="743.2" cy="223.5" r="3.3" fill="#fff" stroke="#1f70b4" stroke-width="0.5"/>
<!-- funnel -->
<path d="M777.5 204.5 H804.5 L794 218 V232 L788 229 V218 Z" fill="#dccbf2" stroke="#8c7cb8" stroke-width="1"/>
<!-- dice -->
<path d="M869.5 204 L884 211 V226.5 L869.5 233.5 L855 226.5 V211 Z" fill="#5f9e70"/>
<path d="M869.5 204 L884 211 L869.5 218 L855 211 Z" fill="#a2d2ac"/>
<path d="M869.5 218 L884 211 V226.5 L869.5 233.5 Z" fill="#72b282"/>
<path d="M855 211 L869.5 218 V233.5 L855 226.5 Z" fill="#6aaa7a"/>
<ellipse cx="869.5" cy="210.5" rx="2.6" ry="1.4" fill="#fff"/>
<circle cx="859" cy="219" r="1" fill="#fff"/><circle cx="862.5" cy="222.5" r="1" fill="#fff"/><circle cx="866" cy="226" r="1" fill="#fff"/>
<circle cx="875" cy="225" r="1" fill="#fff"/><circle cx="880" cy="219" r="1" fill="#fff"/>
<!-- list icon -->
<g fill="#3a78c0"><circle cx="933.5" cy="205.5" r="1.3"/><circle cx="933.5" cy="211" r="1.3"/><circle cx="933.5" cy="216.5" r="1.3"/></g>
<path d="M936.5 205.5 H948.5 M936.5 211 H948.5 M936.5 216.5 H948.5" stroke="#252a35" stroke-width="1.2"/>
<!-- users icon -->
<circle cx="938" cy="230" r="4.5" fill="#b8703e"/>
<path d="M932 241 Q932 234 938 234 Q944 234 944 241Z" fill="#f0b0a0"/>
<ellipse cx="941" cy="232.5" rx="4" ry="4.6" fill="#fcd898" stroke="#d8a860" stroke-width="0.6"/>
<path d="M935 241.5 Q935 236.5 941 236.5 Q947 236.5 947 241.5Z" fill="#a8c8e8" stroke="#5a8ac0" stroke-width="0.7"/>
<!-- pie -->
<circle cx="939.5" cy="255" r="7.2" fill="#b6dbb8" stroke="#5c8a64" stroke-width="1"/>
<path d="M939.5 255 V247.8 A7.2 7.2 0 0 1 946.7 255 Z" fill="#f5b8a0" stroke="#5c8a64" stroke-width="0.8"/>
<path d="M939.5 255 H946.7 A7.2 7.2 0 0 1 943.5 261 Z" fill="#a0c4ec" stroke="#5c8a64" stroke-width="0.8"/>
<!-- red outline -->
<path d="M441 197.5 Q540 195.5 641.5 197 Q644.5 198 644 201 L643.5 224.5 Q643 227.5 640 227.5 Q540 229 441 227.5 Q438.5 226.5 438.5 224 L438.5 201 Q438.5 197.5 441 197.5Z" fill="none" stroke="#e8202c" stroke-width="3.2"/>
</svg>

<div class="a" style="left:89px;top:273px;width:571px;height:1px;background:#a8a8a8"></div>
<div class="a" style="left:89px;top:273px;width:1px;height:540px;background:#a8a8a8"></div>
<div class="a" style="left:90px;top:274px;width:569px;height:39px;background:#efefef"></div>
<div class="a" style="left:90px;top:313px;width:569px;height:1px;background:#6a6a6a"></div>
<div class="a" style="left:189px;top:276px;width:1px;height:34px;background:#6a6a9a"></div>
<div class="a" style="left:239px;top:276px;width:1px;height:34px;background:#6a6a9a"></div>
<div class="a" style="left:269px;top:276px;width:1px;height:34px;background:#6a6a9a"></div>
<div class="a" style="left:329px;top:276px;width:1px;height:34px;background:#6a6a9a"></div>
<div class="a" style="left:419px;top:276px;width:1px;height:34px;background:#6a6a9a"></div>
<div class="a" style="left:509px;top:276px;width:1px;height:34px;background:#6a6a9a"></div>
<div class="a" style="left:599px;top:276px;width:1px;height:34px;background:#6a6a9a"></div>
<div class="t" style="left:93px;top:287px">Имя</div>
<div class="t" style="left:193px;top:287px">Класс</div>
<div class="t" style="left:243px;top:287px">Ос...</div>
<div class="t" style="left:273px;top:287px">Вс...</div>
<div class="t" style="left:303px;top:287px">Се...</div>
<div class="t" style="left:334px;top:287px">Весь класс</div>
<div class="t" style="left:514px;top:287px">А, Б, В, Г</div>
<div class="t" style="left:424px;top:279px">1 группа, 2<br>группа</div>
<div class="t" style="left:603px;top:280px;width:56px;overflow:hidden;letter-spacing:-0.2px">Мальчики<br>Девочки</div>
<div class="a" style="left:90px;top:314px;width:569px;height:20px;background:#fff"></div>
<div class="a" style="left:90px;top:333px;width:569px;height:1px;background:#e6e6e0"></div>
<div class="a" style="left:189px;top:314px;width:1px;height:19px;background:repeating-linear-gradient(#d8d8d8 0 1px,transparent 1px 2px)"></div>
<div class="a" style="left:239px;top:314px;width:1px;height:19px;background:repeating-linear-gradient(#d8d8d8 0 1px,transparent 1px 2px)"></div>
<div class="a" style="left:269px;top:314px;width:1px;height:19px;background:repeating-linear-gradient(#d8d8d8 0 1px,transparent 1px 2px)"></div>
<div class="a" style="left:329px;top:314px;width:1px;height:19px;background:repeating-linear-gradient(#d8d8d8 0 1px,transparent 1px 2px)"></div>
<div class="a" style="left:330px;top:314px;width:89px;height:19px;background:#5f9393"></div>
<div class="a" style="left:420px;top:314px;width:89px;height:19px;background:#33cccc"></div>
<div class="a" style="left:510px;top:314px;width:89px;height:19px;background:#6161bf"></div>
<div class="a" style="left:600px;top:314px;width:59px;height:19px;background:#e6e6f6"></div>
<div class="t" style="left:94px;top:315px;line-height:19px;letter-spacing:-0.2px;">Студент 1</div>
<div class="t" style="left:193px;top:315px;line-height:19px;letter-spacing:-0.2px;">11А</div>
<div class="t" style="left:243px;top:315px;line-height:19px;letter-spacing:-0.2px;">0</div>
<div class="t" style="left:273px;top:315px;line-height:19px;letter-spacing:-0.2px;">2</div>
<div class="t" style="left:304px;top:315px;line-height:19px;letter-spacing:-0.2px;">0</div>
<div class="t" style="left:340px;top:315px;line-height:19px;letter-spacing:-0.2px;">Весь класс</div>
<div class="t" style="left:430px;top:315px;line-height:19px;letter-spacing:-0.2px;">1 группа</div>
<div class="t" style="left:520px;top:315px;line-height:19px;letter-spacing:-0.2px;">А</div>
<div class="a" style="left:90px;top:334px;width:569px;height:20px;background:#f4f4f4"></div>
<div class="a" style="left:90px;top:353px;width:569px;height:1px;background:#e6e6e0"></div>
<div class="a" style="left:189px;top:334px;width:1px;height:19px;background:repeating-linear-gradient(#d8d8d8 0 1px,transparent 1px 2px)"></div>
<div class="a" style="left:239px;top:334px;width:1px;height:19px;background:repeating-linear-gradient(#d8d8d8 0 1px,transparent 1px 2px)"></div>
<div class="a" style="left:269px;top:334px;width:1px;height:19px;background:repeating-linear-gradient(#d8d8d8 0 1px,transparent 1px 2px)"></div>
<div class="a" style="left:329px;top:334px;width:1px;height:19px;background:repeating-linear-gradient(#d8d8d8 0 1px,transparent 1px 2px)"></div>
<div class="a" style="left:330px;top:334px;width:89px;height:19px;background:#5f9393"></div>
<div class="a" style="left:420px;top:334px;width:89px;height:19px;background:#000066"></div>
<div class="a" style="left:510px;top:334px;width:89px;height:19px;background:#6161bf"></div>
<div class="a" style="left:600px;top:334px;width:59px;height:19px;background:#e6e6f6"></div>
<div class="t" style="left:94px;top:335px;line-height:19px;letter-spacing:-0.2px;">Студент 2</div>
<div class="t" style="left:193px;top:335px;line-height:19px;letter-spacing:-0.2px;">11А</div>
<div class="t" style="left:243px;top:335px;line-height:19px;letter-spacing:-0.2px;">1</div>
<div class="t" style="left:273px;top:335px;line-height:19px;letter-spacing:-0.2px;">1</div>
<div class="t" style="left:304px;top:335px;line-height:19px;letter-spacing:-0.2px;">0</div>
<div class="t" style="left:340px;top:335px;line-height:19px;letter-spacing:-0.2px;">Весь класс</div>
<div class="t" style="left:430px;top:335px;line-height:19px;letter-spacing:-0.2px;">2 группа</div>
<div class="t" style="left:520px;top:335px;line-height:19px;letter-spacing:-0.2px;">А</div>
<div class="a" style="left:90px;top:354px;width:569px;height:20px;background:#fff"></div>
<div class="a" style="left:90px;top:373px;width:569px;height:1px;background:#e6e6e0"></div>
<div class="a" style="left:189px;top:354px;width:1px;height:19px;background:repeating-linear-gradient(#d8d8d8 0 1px,transparent 1px 2px)"></div>
<div class="a" style="left:239px;top:354px;width:1px;height:19px;background:repeating-linear-gradient(#d8d8d8 0 1px,transparent 1px 2px)"></div>
<div class="a" style="left:269px;top:354px;width:1px;height:19px;background:repeating-linear-gradient(#d8d8d8 0 1px,transparent 1px 2px)"></div>
<div class="a" style="left:329px;top:354px;width:1px;height:19px;background:repeating-linear-gradient(#d8d8d8 0 1px,transparent 1px 2px)"></div>
<div class="a" style="left:330px;top:354px;width:89px;height:19px;background:#5f9393"></div>
<div class="a" style="left:420px;top:354px;width:89px;height:19px;background:#33cccc"></div>
<div class="a" style="left:510px;top:354px;width:89px;height:19px;background:#990033"></div>
<div class="a" style="left:600px;top:354px;width:59px;height:19px;background:#e6e6f6"></div>
<div class="t" style="left:94px;top:355px;line-height:19px;letter-spacing:-0.2px;">Студент 3</div>
<div class="t" style="left:193px;top:355px;line-height:19px;letter-spacing:-0.2px;">11А</div>
<div class="t" style="left:243px;top:355px;line-height:19px;letter-spacing:-0.2px;">0</div>
<div class="t" style="left:273px;top:355px;line-height:19px;letter-spacing:-0.2px;">2</div>
<div class="t" style="left:304px;top:355px;line-height:19px;letter-spacing:-0.2px;">0</div>
<div class="t" style="left:340px;top:355px;line-height:19px;letter-spacing:-0.2px;">Весь класс</div>
<div class="t" style="left:430px;top:355px;line-height:19px;letter-spacing:-0.2px;">1 группа</div>
<div class="t" style="left:520px;top:355px;line-height:19px;letter-spacing:-0.2px;">Б</div>
<div class="a" style="left:90px;top:374px;width:569px;height:20px;background:#f4f4f4"></div>
<div class="a" style="left:90px;top:393px;width:569px;height:1px;background:#e6e6e0"></div>
<div class="a" style="left:189px;top:374px;width:1px;height:19px;background:repeating-linear-gradient(#d8d8d8 0 1px,transparent 1px 2px)"></div>
<div class="a" style="left:239px;top:374px;width:1px;height:19px;background:repeating-linear-gradient(#d8d8d8 0 1px,transparent 1px 2px)"></div>
<div class="a" style="left:269px;top:374px;width:1px;height:19px;background:repeating-linear-gradient(#d8d8d8 0 1px,transparent 1px 2px)"></div>
<div class="a" style="left:329px;top:374px;width:1px;height:19px;background:repeating-linear-gradient(#d8d8d8 0 1px,transparent 1px 2px)"></div>
<div class="a" style="left:330px;top:374px;width:89px;height:19px;background:#5f9393"></div>
<div class="a" style="left:420px;top:374px;width:89px;height:19px;background:#33cccc"></div>
<div class="a" style="left:510px;top:374px;width:89px;height:19px;background:#9966ff"></div>
<div class="a" style="left:600px;top:374px;width:59px;height:19px;background:#e6e6f6"></div>
<div class="t" style="left:94px;top:375px;line-height:19px;letter-spacing:-0.2px;">Студент 4</div>
<div class="t" style="left:193px;top:375px;line-height:19px;letter-spacing:-0.2px;">11А</div>
<div class="t" style="left:243px;top:375px;line-height:19px;letter-spacing:-0.2px;">0</div>
<div class="t" style="left:273px;top:375px;line-height:19px;letter-spacing:-0.2px;">1</div>
<div class="t" style="left:304px;top:375px;line-height:19px;letter-spacing:-0.2px;">0</div>
<div class="t" style="left:340px;top:375px;line-height:19px;letter-spacing:-0.2px;">Весь класс</div>
<div class="t" style="left:430px;top:375px;line-height:19px;letter-spacing:-0.2px;">1 группа</div>
<div class="t" style="left:520px;top:375px;line-height:19px;letter-spacing:-0.2px;">В</div>
<div class="a" style="left:90px;top:394px;width:569px;height:20px;background:#fff"></div>
<div class="a" style="left:90px;top:413px;width:569px;height:1px;background:#e6e6e0"></div>
<div class="a" style="left:189px;top:394px;width:1px;height:19px;background:repeating-linear-gradient(#d8d8d8 0 1px,transparent 1px 2px)"></div>
<div class="a" style="left:239px;top:394px;width:1px;height:19px;background:repeating-linear-gradient(#d8d8d8 0 1px,transparent 1px 2px)"></div>
<div class="a" style="left:269px;top:394px;width:1px;height:19px;background:repeating-linear-gradient(#d8d8d8 0 1px,transparent 1px 2px)"></div>
<div class="a" style="left:329px;top:394px;width:1px;height:19px;background:repeating-linear-gradient(#d8d8d8 0 1px,transparent 1px 2px)"></div>
<div class="a" style="left:330px;top:394px;width:89px;height:19px;background:#5f9393"></div>
<div class="a" style="left:420px;top:394px;width:89px;height:19px;background:#33cccc"></div>
<div class="a" style="left:510px;top:394px;width:89px;height:19px;background:#c0c000"></div>
<div class="a" style="left:600px;top:394px;width:59px;height:19px;background:#e6e6f6"></div>
<div class="t" style="left:94px;top:395px;line-height:19px;letter-spacing:-0.2px;">Студент 5</div>
<div class="t" style="left:193px;top:395px;line-height:19px;letter-spacing:-0.2px;">11А</div>
<div class="t" style="left:243px;top:395px;line-height:19px;letter-spacing:-0.2px;">1</div>
<div class="t" style="left:273px;top:395px;line-height:19px;letter-spacing:-0.2px;">2</div>
<div class="t" style="left:304px;top:395px;line-height:19px;letter-spacing:-0.2px;">0</div>
<div class="t" style="left:340px;top:395px;line-height:19px;letter-spacing:-0.2px;">Весь класс</div>
<div class="t" style="left:430px;top:395px;line-height:19px;letter-spacing:-0.2px;">1 группа</div>
<div class="t" style="left:520px;top:395px;line-height:19px;letter-spacing:-0.2px;">Г</div>
<div class="a" style="left:90px;top:414px;width:569px;height:20px;background:#c0ffc0"></div>
<div class="a" style="left:90px;top:433px;width:569px;height:1px;background:#e6e6e0"></div>
<div class="a" style="left:189px;top:414px;width:1px;height:19px;background:repeating-linear-gradient(#d8d8d8 0 1px,transparent 1px 2px)"></div>
<div class="a" style="left:239px;top:414px;width:1px;height:19px;background:repeating-linear-gradient(#d8d8d8 0 1px,transparent 1px 2px)"></div>
<div class="a" style="left:269px;top:414px;width:1px;height:19px;background:repeating-linear-gradient(#d8d8d8 0 1px,transparent 1px 2px)"></div>
<div class="a" style="left:329px;top:414px;width:1px;height:19px;background:repeating-linear-gradient(#d8d8d8 0 1px,transparent 1px 2px)"></div>
<div class="a" style="left:330px;top:414px;width:89px;height:19px;background:#97b8b8"></div>
<div class="a" style="left:420px;top:414px;width:89px;height:19px;background:#4b4b90"></div>
<div class="a" style="left:510px;top:414px;width:89px;height:19px;background:#d2d24e"></div>
<div class="a" style="left:600px;top:414px;width:59px;height:19px;background:#ececf6"></div>
<div class="t" style="left:94px;top:415px;line-height:19px;letter-spacing:-0.2px;">Студент 6</div>
<div class="t" style="left:193px;top:415px;line-height:19px;letter-spacing:-0.2px;">11А</div>
<div class="t" style="left:243px;top:415px;line-height:19px;letter-spacing:-0.2px;">0</div>
<div class="t" style="left:273px;top:415px;line-height:19px;letter-spacing:-0.2px;">0</div>
<div class="t" style="left:304px;top:415px;line-height:19px;letter-spacing:-0.2px;">0</div>
<div class="t" style="left:340px;top:415px;line-height:19px;letter-spacing:-0.2px;">Весь класс</div>
<div class="t" style="left:430px;top:415px;line-height:19px;letter-spacing:-0.2px;">2 группа</div>
<div class="t" style="left:520px;top:415px;line-height:19px;letter-spacing:-0.2px;">Г</div>
<div class="a" style="left:299px;top:274px;width:1px;height:159px;background:#0000ff"></div>
<div class="a" style="left:299px;top:414px;width:1px;height:19px;background:#e0e000"></div>
<div class="a" style="left:660px;top:273px;width:5px;height:540px;background:#ececec"></div>
<div class="a" style="left:665px;top:273px;width:441px;height:1px;background:#a8a8a8"></div>
<div class="a" style="left:665px;top:273px;width:1px;height:540px;background:#a8a8a8"></div>
<div class="a" style="left:666px;top:274px;width:439px;height:23px;background:#efefef"></div>
<div class="a" style="left:666px;top:297px;width:439px;height:1px;background:#6a6a6a"></div>
<div class="a" style="left:735px;top:277px;width:1px;height:18px;background:#6a6a9a"></div>
<div class="a" style="left:792px;top:277px;width:1px;height:18px;background:#6a6a9a"></div>
<div class="a" style="left:849px;top:277px;width:1px;height:18px;background:#6a6a9a"></div>
<div class="a" style="left:908px;top:277px;width:1px;height:18px;background:#6a6a9a"></div>
<div class="a" style="left:968px;top:277px;width:1px;height:18px;background:#6a6a9a"></div>
<div class="a" style="left:1031px;top:277px;width:1px;height:18px;background:#6a6a9a"></div>
<div class="a" style="left:1103px;top:277px;width:1px;height:18px;background:#6a6a9a"></div>
<div class="t" style="left:669px;top:279px">Имя</div>
<div class="t" style="left:739px;top:279px">Сокра...</div>
<div class="t" style="left:796px;top:279px">Ученики</div>
<div class="t" style="left:853px;top:279px">Оставш...</div>
<div class="t" style="left:912px;top:279px">Всего</div>
<div class="t" style="left:972px;top:279px">Оставш...</div>
<div class="t" style="left:1035px;top:279px">Оставшие...</div>
<div class="a" style="left:666px;top:298px;width:439px;height:20px;background:#c0ffc0"></div>
<div class="a" style="left:666px;top:317px;width:439px;height:1px;background:#e6e6e0"></div>
<div class="t" style="left:670px;top:299px;line-height:19px;letter-spacing:-0.2px;">Все классы</div>
<div class="t" style="left:797px;top:299px;line-height:19px;letter-spacing:-0.2px;">6</div>
<div class="t" style="left:854px;top:299px;line-height:19px;letter-spacing:-0.2px;">2</div>
<div class="t" style="left:913px;top:299px;line-height:19px;letter-spacing:-0.2px;">8</div>
<div class="t" style="left:973px;top:299px;line-height:19px;letter-spacing:-0.2px;">0</div>
<div class="t" style="left:1036px;top:299px;line-height:19px;letter-spacing:-0.2px;">0|0</div>
<div class="a" style="left:666px;top:318px;width:439px;height:20px;background:#f4f4f4"></div>
<div class="a" style="left:666px;top:337px;width:439px;height:1px;background:#e6e6e0"></div>
<div class="t" style="left:670px;top:319px;line-height:19px;letter-spacing:-0.2px;">11А</div>
<div class="t" style="left:740px;top:319px;line-height:19px;letter-spacing:-0.2px;">11А</div>
<div class="t" style="left:797px;top:319px;line-height:19px;letter-spacing:-0.2px;">6</div>
<div class="t" style="left:854px;top:319px;line-height:19px;letter-spacing:-0.2px;">2</div>
<div class="t" style="left:913px;top:319px;line-height:19px;letter-spacing:-0.2px;">8</div>
<div class="t" style="left:973px;top:319px;line-height:19px;letter-spacing:-0.2px;">0</div>
<div class="t" style="left:1036px;top:319px;line-height:19px;letter-spacing:-0.2px;">0|0</div>
<div class="a" style="left:666px;top:338px;width:439px;height:20px;background:#fff"></div>
<div class="a" style="left:666px;top:357px;width:439px;height:1px;background:#e6e6e0"></div>
<div class="t" style="left:670px;top:339px;line-height:19px;letter-spacing:-0.2px;">11Б</div>
<div class="t" style="left:740px;top:339px;line-height:19px;letter-spacing:-0.2px;">11Б</div>
<div class="t" style="left:797px;top:339px;line-height:19px;letter-spacing:-0.2px;">0</div>
<div class="t" style="left:854px;top:339px;line-height:19px;letter-spacing:-0.2px;">0</div>
<div class="t" style="left:913px;top:339px;line-height:19px;letter-spacing:-0.2px;">0</div>
<div class="t" style="left:973px;top:339px;line-height:19px;letter-spacing:-0.2px;">0</div>
<div class="t" style="left:1036px;top:339px;line-height:19px;letter-spacing:-0.2px;">0|0</div>
<div class="a" style="left:666px;top:679px;width:439px;height:5px;background:#efefef"></div>
<div class="a" style="left:665px;top:684px;width:441px;height:1px;background:#8a8a8a"></div>
<div class="a" style="left:666px;top:685px;width:439px;height:23px;background:#efefef"></div>
<div class="a" style="left:666px;top:708px;width:439px;height:1px;background:#6a6a6a"></div>
<div class="a" style="left:765px;top:687px;width:1px;height:18px;background:#6a6a9a"></div>
<div class="a" style="left:815px;top:687px;width:1px;height:18px;background:#6a6a9a"></div>
<div class="a" style="left:845px;top:687px;width:1px;height:18px;background:#6a6a9a"></div>
<div class="a" style="left:875px;top:687px;width:1px;height:18px;background:#6a6a9a"></div>
<div class="a" style="left:904px;top:687px;width:1px;height:18px;background:#6a6a9a"></div>
<div class="a" style="left:1085px;top:687px;width:1px;height:18px;background:#6a6a9a"></div>
<div class="t" style="left:670px;top:690px">Имя</div>
<div class="t" style="left:769px;top:690px">Сокра...</div>
<div class="t" style="left:819px;top:690px">Ос...</div>
<div class="t" style="left:849px;top:690px">Вс...</div>
<div class="t" style="left:879px;top:690px">В...</div>
<div class="t" style="left:908px;top:690px">Распр. в неделю</div>
<div class="t" style="left:1089px;top:690px">Важность</div>
<div class="a" style="left:666px;top:709px;width:439px;height:20px;background:#c0ffc0"></div>
<div class="a" style="left:666px;top:728px;width:439px;height:1px;background:#e6e6e0"></div>
<div class="t" style="left:670px;top:710px;line-height:19px;letter-spacing:-0.2px;">Все предметы</div>
<div class="t" style="left:819px;top:710px;line-height:19px;letter-spacing:-0.2px;">2</div>
<div class="t" style="left:849px;top:710px;line-height:19px;letter-spacing:-0.2px;">8</div>
<div class="a" style="left:666px;top:729px;width:439px;height:20px;background:#f4f4f4"></div>
<div class="a" style="left:666px;top:748px;width:439px;height:1px;background:#e6e6e0"></div>
<div class="t" style="left:670px;top:730px;line-height:19px;letter-spacing:-0.2px;">Английский яз...</div>
<div class="t" style="left:769px;top:730px;line-height:19px;letter-spacing:-0.2px;">Ая</div>
<div class="t" style="left:819px;top:730px;line-height:19px;letter-spacing:-0.2px;">0</div>
<div class="t" style="left:849px;top:730px;line-height:19px;letter-spacing:-0.2px;">0</div>
<div class="t" style="left:908px;top:730px;line-height:19px;letter-spacing:-0.2px;">0</div>
<div class="a" style="left:666px;top:749px;width:439px;height:20px;background:#fff"></div>
<div class="a" style="left:666px;top:768px;width:439px;height:1px;background:#e6e6e0"></div>
<div class="t" style="left:670px;top:750px;line-height:19px;letter-spacing:-0.2px;">Математика</div>
<div class="t" style="left:769px;top:750px;line-height:19px;letter-spacing:-0.2px;">Мат</div>
<div class="t" style="left:819px;top:750px;line-height:19px;letter-spacing:-0.2px;">2</div>
<div class="t" style="left:849px;top:750px;line-height:19px;letter-spacing:-0.2px;">5</div>
<div class="t" style="left:908px;top:750px;line-height:19px;letter-spacing:-0.2px;">2/3</div>
<div class="t" style="left:1089px;top:750px;line-height:19px;letter-spacing:-0.2px;">Нормальная</div>
<div class="a" style="left:666px;top:769px;width:439px;height:20px;background:#f4f4f4"></div>
<div class="a" style="left:666px;top:788px;width:439px;height:1px;background:#e6e6e0"></div>
<div class="t" style="left:670px;top:770px;line-height:19px;letter-spacing:-0.2px;">Информатика</div>
<div class="t" style="left:769px;top:770px;line-height:19px;letter-spacing:-0.2px;">Инф</div>
<div class="t" style="left:819px;top:770px;line-height:19px;letter-spacing:-0.2px;">0</div>
<div class="t" style="left:849px;top:770px;line-height:19px;letter-spacing:-0.2px;">3</div>
<div class="t" style="left:879px;top:770px;line-height:19px;letter-spacing:-0.2px;">80</div>
<div class="t" style="left:908px;top:770px;line-height:19px;letter-spacing:-0.2px;">1/1/0/1</div>
<div class="t" style="left:1089px;top:770px;line-height:19px;letter-spacing:-0.2px;">Нормальная</div>
<div class="a" style="left:1105px;top:163px;width:1px;height:645px;background:#fff"></div>
<div class="a" style="left:1106px;top:162px;width:1px;height:646px;background:#1b7fd0"></div>
<div class="a" style="left:1107px;top:162px;width:2px;height:444px;background:#b8b6bc"></div>
<div class="a" style="left:1107px;top:164px;width:2px;height:1px;background:#111"></div>
<div class="a" style="left:1107px;top:191px;width:2px;height:1px;background:#111"></div>
<div class="a" style="left:1107px;top:218px;width:2px;height:1px;background:#111"></div>
<div class="a" style="left:1107px;top:245px;width:2px;height:1px;background:#111"></div>
<div class="a" style="left:1107px;top:272px;width:2px;height:1px;background:#111"></div>
<div class="a" style="left:1107px;top:299px;width:2px;height:1px;background:#111"></div>
<div class="a" style="left:1107px;top:326px;width:2px;height:1px;background:#111"></div>
<div class="a" style="left:1107px;top:606px;width:2px;height:6px;background:#d6d6d6"></div>
<div class="a" style="left:1107px;top:612px;width:2px;height:111px;background:#6e6e80"></div>
<div class="a" style="left:1107px;top:723px;width:2px;height:2px;background:#e0e0e0"></div>
<div class="a" style="left:1107px;top:746px;width:2px;height:1px;background:#777"></div>
<div class="a" style="left:987px;top:177px;width:10px;height:1px;background:#111"></div>
<div class="a" style="left:1032px;top:172px;width:10px;height:10px;border:1px solid #111"></div>
<svg class="a" style="left:1077px;top:171px" width="12" height="12" viewBox="0 0 12 12"><path d="M1 1 L11 11 M11 1 L1 11" stroke="#111" stroke-width="1.1"/></svg>
<div class="a" style="left:572px;top:425px;width:203px;height:280px;background:rgba(0,0,0,0.16);filter:blur(2.5px);border-radius:3px"></div>
<div class="a" style="left:569px;top:421px;width:201px;height:280px;background:#f9f9f9;border:1px solid #8c8c8c;border-radius:2px"></div>
<div class="a" style="left:570px;top:422px;width:199px;height:25px;background:#dfecfb"></div>
<div class="a" style="left:570px;top:447px;width:26px;height:253px;background:#efefef"></div>
<div class="a" style="left:596px;top:447px;width:1px;height:253px;background:#c9c9c9"></div>
<div class="a" style="left:570px;top:516px;width:199px;height:21px;background:#fddc77"></div>
<div class="t" style="left:578px;top:430px;font-weight:bold;color:#1f4f9c;letter-spacing:-0.6px">Студент 6</div>
<div class="t" style="left:605px;top:454px;color:#17176a;letter-spacing:-0.2px">А</div>
<div class="t" style="left:605px;top:476px;color:#17176a;letter-spacing:-0.2px">Б</div>
<div class="t" style="left:605px;top:498px;color:#17176a;letter-spacing:-0.2px">В</div>
<div class="t" style="left:605px;top:520px;color:#17176a;letter-spacing:-0.2px">Г</div>
<div class="t" style="left:605px;top:544px;color:#17176a;letter-spacing:-0.2px">Добавить запрос</div>
<div class="t" style="left:605px;top:566px;color:#17176a;letter-spacing:-0.2px">Класс</div>
<div class="t" style="left:605px;top:588px;color:#17176a;letter-spacing:-0.2px">Важность</div>
<div class="t" style="left:605px;top:612px;color:#17176a;letter-spacing:-0.2px">Рабочее время</div>
<div class="t" style="left:605px;top:636px;color:#17176a;letter-spacing:-0.2px">Удалить учеников</div>
<div class="t" style="left:605px;top:660px;color:#17176a;letter-spacing:-0.2px">Закрепить все выборы</div>
<div class="t" style="left:605px;top:682px;color:#17176a;letter-spacing:-0.2px">Освободить все выборы</div>
<div class="a" style="left:605px;top:606px;width:163px;height:1px;background:#d2d2d2"></div>
<div class="a" style="left:605px;top:630px;width:163px;height:1px;background:#d2d2d2"></div>
<div class="a" style="left:605px;top:654px;width:163px;height:1px;background:#d2d2d2"></div>
<div class="a" style="left:754px;top:568.5px;width:0;height:0;border-top:4px solid transparent;border-bottom:4px solid transparent;border-left:5px solid #3f4f9a"></div>
<div class="a" style="left:754px;top:590.5px;width:0;height:0;border-top:4px solid transparent;border-bottom:4px solid transparent;border-left:5px solid #3f4f9a"></div>
<svg class="a" style="left:0;top:0" width="1109" height="808" viewBox="0 0 1109 808">
<!-- mouse -->
<path d="M554.5 436 Q546 436.5 546 446 V456 Q546 465 554.5 465 Q563 465 563 456 V446 Q563 436.5 554.5 436Z" fill="#c2c2c2"/>
<path d="M555.5 436 Q563 437 563 446 V451 H555.5 Z" fill="#ee1c24"/>
<path d="M546 451.5 H563" stroke="#fff" stroke-width="1"/>
<path d="M554.5 436 V451" stroke="#fff" stroke-width="1"/>
<ellipse cx="554.5" cy="444" rx="1.8" ry="3.5" fill="#d8d8d8" stroke="#fff" stroke-width="0.6"/>
<!-- red box small -->
<path d="M555 414.5 Q565 413.5 575 414 Q577 415 576.5 418 V431 Q576.5 434 573.5 434 H556 Q552.5 434 552.5 431 V418 Q552.5 414.5 555 414.5Z" fill="none" stroke="#e8202c" stroke-width="3.4"/>
<!-- red outline over menu items -->
<path d="M573 450 Q670 448 767 449.5 Q769.5 450 769.5 452.5 L769 535 Q769 538 766 538 Q670 539.5 574 538.5 Q571 538.5 571 535.5 L570.8 453 Q570.8 450 573 450Z" fill="none" stroke="#e8202c" stroke-width="3.4"/>
</svg>

</body></html>
